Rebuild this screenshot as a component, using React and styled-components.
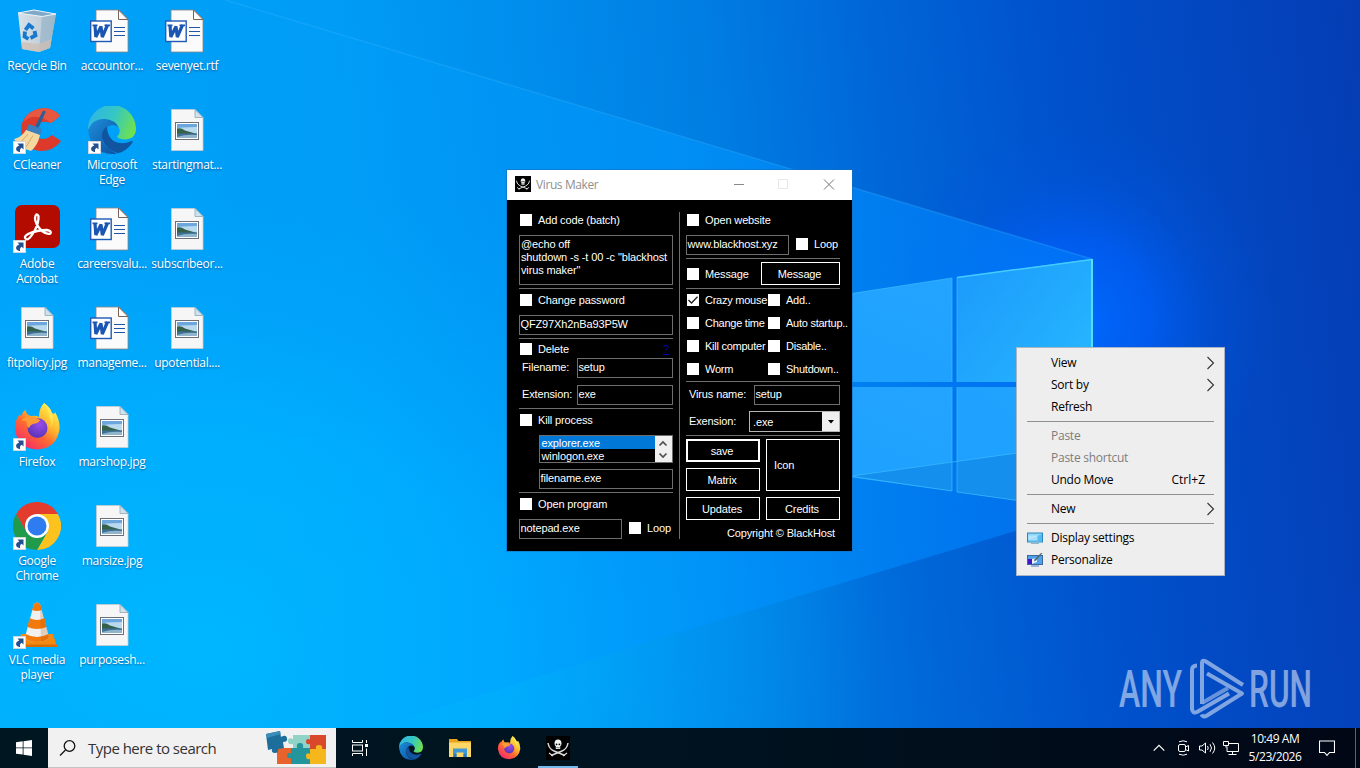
import React from "react";
import styled, { createGlobalStyle } from "styled-components";

const desktopIcons = [
  { name: "Recycle Bin", icon: RecycleIcon },
  { name: "CCleaner", icon: CCleanerIcon, shortcut: true },
  { name: "Adobe Acrobat", icon: AcrobatIcon, shortcut: true },
  { name: "fitpolicy.jpg", icon: JpgIcon },
  { name: "Firefox", icon: FirefoxIcon, shortcut: true },
  { name: "Google Chrome", icon: ChromeIcon, shortcut: true },
  { name: "VLC media player", icon: VlcIcon, shortcut: true },
  { name: "accountor...", icon: WordIcon },
  { name: "Microsoft Edge", icon: EdgeIcon, shortcut: true },
  { name: "careersvalu...", icon: WordIcon },
  { name: "manageme...", icon: WordIcon },
  { name: "marshop.jpg", icon: JpgIcon },
  { name: "marsize.jpg", icon: JpgIcon },
  { name: "purposesh...", icon: JpgIcon },
  { name: "sevenyet.rtf", icon: WordIcon },
  { name: "startingmat...", icon: JpgIcon },
  { name: "subscribeor...", icon: JpgIcon },
  { name: "upotential....", icon: JpgIcon },
];

const menuGroups = [
  [
    { label: "View", sub: true },
    { label: "Sort by", sub: true },
    { label: "Refresh" },
  ],
  [
    { label: "Paste", disabled: true },
    { label: "Paste shortcut", disabled: true },
    { label: "Undo Move", keys: "Ctrl+Z" },
  ],
  [{ label: "New", sub: true }],
  [
    { label: "Display settings", icon: DisplayIcon },
    { label: "Personalize", icon: PersonalizeIcon },
  ],
];

const toggles = [
  ["Crazy mouse", "Add..", true],
  ["Change time", "Auto startup.."],
  ["Kill computer", "Disable.."],
  ["Worm", "Shutdown.."],
];

export default function App() {
  return (
    <>
      <GlobalStyle />
      <Screen>
        <Wallpaper />
        <Desktop>
          {desktopIcons.map(({ name, icon: Icon, shortcut }) => (
            <DesktopItem key={name}>
              <IconBox>
                <Icon />
                {shortcut && <ShortcutArrow />}
              </IconBox>
              <span>{name}</span>
            </DesktopItem>
          ))}
        </Desktop>
        <MakerWindow />
        <ContextMenu />
        <AnyRunLogo />
        <Taskbar />
      </Screen>
    </>
  );
}

function Check({ label, checked, top, width }) {
  return (
    <CheckLabel $top={top} $width={width}>
      <CheckBox>
        {checked && (
          <svg width="12" height="12" viewBox="0 0 12 12">
            <path
              d="M1.500 6 L4.500 9 L10.500 2.800"
              fill="none"
              stroke="#222"
              strokeWidth="1.300"
            />
          </svg>
        )}
      </CheckBox>
      {label}
    </CheckLabel>
  );
}

function MakerWindow() {
  return (
    <WindowFrame>
      <TitleBar>
        <SkullIcon size={16} />
        <h1>Virus Maker</h1>
        <TitleButtons>
          <svg width="118" height="30" viewBox="0 0 118 30" fill="none">
            <path d="M4 14.500h10" stroke="#8a8a8a" />
            <rect x="48.500" y="9.500" width="9" height="9" stroke="#e8e8e8" />
            <path d="M94 9.500l10 10M104 9.500l-10 10" stroke="#777" />
          </svg>
        </TitleButtons>
      </TitleBar>
      <WindowBody>
        <Column>
          <Check label="Add code (batch)" top={2} />
          <Field $top={9} $height={50} $multi>
            @echo off
            <br />
            shutdown -s -t 00 -c "blackhost
            <br />
            virus maker"
          </Field>
          <Rule $top={3} />
          <Check label="Change password" top={5} />
          <Field $top={9} $height={20}>
            QFZ97Xh2nBa93P5W
          </Field>
          <Rule $top={3} />
          <Row $top={4} $height={12}>
            <Check label="Delete" />
            <HelpLink>?</HelpLink>
          </Row>
          <Row $top={3}>
            <FieldLabel $width={55}>Filename:</FieldLabel>
            <Field $height={20}>setup</Field>
          </Row>
          <Row $top={7}>
            <FieldLabel $width={55}>Extension:</FieldLabel>
            <Field $height={20}>exe</Field>
          </Row>
          <Rule $top={3} />
          <Check label="Kill process" top={5} />
          <Indent $top={9}>
            <ListBox>
              <ListItems>
                <ListItem $selected>explorer.exe</ListItem>
                <ListItem>winlogon.exe</ListItem>
              </ListItems>
              <ScrollButtons>
                <svg width="16" height="26" viewBox="0 0 16 26" fill="none">
                  <path
                    d="M4.500 9.500L8 6l3.500 3.500M4.500 17.500L8 21l3.500-3.500"
                    stroke="#505050"
                    strokeWidth="1.700"
                  />
                </svg>
              </ScrollButtons>
            </ListBox>
          </Indent>
          <Indent $top={6}>
            <Field $height={20}>filename.exe</Field>
          </Indent>
          <Rule $top={3} />
          <Check label="Open program" top={5} />
          <Row $top={9}>
            <Field $height={20} $width={103}>
              notepad.exe
            </Field>
            <LoopSlot>
              <Check label="Loop" />
            </LoopSlot>
          </Row>
        </Column>
        <Divider />
        <Column>
          <Check label="Open website" top={2} />
          <Row $top={9}>
            <Field $height={20} $width={103}>
              www.blackhost.xyz
            </Field>
            <LoopSlot>
              <Check label="Loop" />
            </LoopSlot>
          </Row>
          <Rule $top={3} />
          <Row $top={3}>
            <Check label="Message" width={75} />
            <FlatButton>Message</FlatButton>
          </Row>
          <Rule $top={3} />
          <ToggleGrid>
            {toggles.map(([left, right, checked]) => (
              <React.Fragment key={left}>
                <Check label={left} checked={checked} />
                <Check label={right} />
              </React.Fragment>
            ))}
          </ToggleGrid>
          <Rule $top={6} />
          <Row $top={3}>
            <FieldLabel $width={65}>Virus name:</FieldLabel>
            <Field $height={20}>setup</Field>
          </Row>
          <Row $top={6}>
            <FieldLabel $width={60}>Exension:</FieldLabel>
            <Combo>
              <span>.exe</span>
              <ComboArrow>
                <svg width="6" height="4" viewBox="0 0 6 4">
                  <path d="M0 0h6L3 3.500z" fill="#000" />
                </svg>
              </ComboArrow>
            </Combo>
          </Row>
          <Rule $top={3} />
          <ButtonGrid>
            <FlatButton $primary>save</FlatButton>
            <IconButton>Icon</IconButton>
            <FlatButton>Matrix</FlatButton>
            <FlatButton>Updates</FlatButton>
            <FlatButton>Credits</FlatButton>
          </ButtonGrid>
          <Copyright>Copyright © BlackHost</Copyright>
        </Column>
      </WindowBody>
    </WindowFrame>
  );
}

function ContextMenu() {
  return (
    <Menu>
      {menuGroups.map((group, i) => (
        <React.Fragment key={i}>
          {i > 0 && <MenuSeparator />}
          {group.map(({ label, sub, disabled, keys, icon: Icon }) => (
            <MenuItem key={label} $disabled={disabled}>
              <MenuIcon>{Icon && <Icon />}</MenuIcon>
              <span>{label}</span>
              {keys && <kbd>{keys}</kbd>}
              {sub && (
                <svg width="10" height="14" viewBox="0 0 10 14">
                  <path
                    d="M1.500 1l6 6-6 6"
                    fill="none"
                    stroke="#333"
                    strokeWidth="1.100"
                  />
                </svg>
              )}
            </MenuItem>
          ))}
        </React.Fragment>
      ))}
    </Menu>
  );
}

function Taskbar() {
  return (
    <Bar>
      <StartButton>
        <svg width="16" height="16" viewBox="0 0 16 16" fill="#fff">
          <path d="M0 2.300L6.700 1.300V7.500H0zM7.500 1.200L16 0V7.500H7.500zM0 8.300H6.700V14.600L0 13.700zM7.500 8.300H16V16L7.500 14.800z" />
        </svg>
      </StartButton>
      <SearchBox>
        <svg width="18" height="18" viewBox="0 0 18 18" fill="none">
          <circle cx="10.500" cy="7" r="5.300" stroke="#111" strokeWidth="1.300" />
          <path d="M6.500 11L1 16.500" stroke="#111" strokeWidth="1.300" />
        </svg>
        <span>Type here to search</span>
        <PuzzleIcon />
      </SearchBox>
      <TaskButton $first>
        <TaskViewIcon />
      </TaskButton>
      <TaskButton>
        <EdgeIcon size={24} />
      </TaskButton>
      <TaskButton>
        <FolderIcon />
      </TaskButton>
      <TaskButton>
        <FirefoxIcon size={24} />
      </TaskButton>
      <TaskButton $active>
        <SkullIcon size={24} />
      </TaskButton>
      <Tray>
        <svg width="86" height="18" viewBox="0 0 86 18" fill="none" stroke="#fff">
          <path d="M.7 11.700L6 6.400l5.300 5.300" strokeWidth="1.200" />
          <rect x="25.500" y="5.500" width="7" height="7" rx="1.500" />
          <path d="M32.500 8l3-1.500v5.500l-3-1.500M26 2.800q4.500-2 8 0M26 15.200q4.500 2 8 0" />
          <path d="M46.500 7h2.500l3.500-3v10l-3.500-3h-2.500z" />
          <path d="M54.500 7q1.500 2 0 4M57 5.200q3 3.800 0 7.600M59.500 3.500q4.500 5.500 0 11" />
          <path d="M75.500 4.500h10v8h-11.500v-5M79.500 12.500v3M75.500 15.500h8M70.500 2.500h5v4h-5zM73 6.500v2" />
        </svg>
        <Clock>
          <span>10:49 AM</span>
          <span>5/23/2026</span>
        </Clock>
        <svg width="16" height="17" viewBox="0 0 16 17" fill="none">
          <path
            d="M.5 1h15v11.500H10.500L8 15.300 5.500 12.500H.5z"
            stroke="#fff"
            strokeWidth="1.100"
          />
        </svg>
        <ShowDesktop />
      </Tray>
    </Bar>
  );
}

function Wallpaper() {
  return (
    <Backdrop viewBox="0 0 1360 768" preserveAspectRatio="none">
      <defs>
        <linearGradient id="sky" x1="0" x2="1" y1="0.060" y2="0">
          <stop offset="0" stopColor="#00a3fa" />
          <stop offset=".25" stopColor="#009cf6" />
          <stop offset=".4" stopColor="#008cec" />
          <stop offset=".52" stopColor="#007de2" />
          <stop offset=".64" stopColor="#0066d8" />
          <stop offset=".78" stopColor="#0050cb" />
          <stop offset="1" stopColor="#053db4" />
        </linearGradient>
        <radialGradient
          id="lowGlow"
          gradientUnits="userSpaceOnUse"
          cx="200"
          cy="640"
          r="680"
          gradientTransform="translate(0 200) scale(1 .7)"
        >
          <stop offset="0" stopColor="#00b6ff" />
          <stop offset=".45" stopColor="#00b1ff" stopOpacity=".85" />
          <stop offset="1" stopColor="#00a4f8" stopOpacity="0" />
        </radialGradient>
        <radialGradient
          id="winGlow"
          gradientUnits="userSpaceOnUse"
          cx="1075"
          cy="320"
          r="200"
        >
          <stop offset="0" stopColor="#006aff" />
          <stop offset=".4" stopColor="#0060fa" stopOpacity=".7" />
          <stop offset=".7" stopColor="#0058e6" stopOpacity=".28" />
          <stop offset="1" stopColor="#0054dc" stopOpacity="0" />
        </radialGradient>
        <linearGradient
          id="beam"
          gradientUnits="userSpaceOnUse"
          x1="250"
          x2="1093"
          y1="0"
          y2="0"
        >
          <stop offset="0" stopColor="#00a8ff" stopOpacity="0" />
          <stop offset=".5" stopColor="#0098ff" stopOpacity=".6" />
          <stop offset="1" stopColor="#0078f8" stopOpacity=".7" />
        </linearGradient>
        <linearGradient id="pane" x1="0" x2="1" y1="1" y2="0">
          <stop offset="0" stopColor="#1b9fff" />
          <stop offset="1" stopColor="#23a4ff" />
        </linearGradient>
        <linearGradient id="paneBright" x1="0" x2="1" y1="0" y2=".7">
          <stop offset="0" stopColor="#1b99fb" />
          <stop offset="1" stopColor="#26b4ff" />
        </linearGradient>
      </defs>
      <rect width="1360" height="768" fill="url(#sky)" />
      <rect width="1360" height="768" fill="url(#lowGlow)" />
      <circle cx="1075" cy="320" r="200" fill="url(#winGlow)" />
      <path d="M225 0L1092 259V508L680 632 250 768H0V0z" fill="url(#beam)" />
      <path d="M225 0L1092 259" stroke="#35b4ff" strokeWidth="1.500" opacity=".3" />
      <path d="M700 317L952 278V382H700z" fill="url(#pane)" />
      <path d="M957 277L1092 259V382H957z" fill="url(#paneBright)" />
      <path d="M700 387H952V491L700 457z" fill="url(#pane)" />
      <path d="M957 387H1092V511L957 492z" fill="url(#pane)" />
      <path d="M852 476L952 462V491zM957 461.500L1092 443V511L957 492z" fill="#148fee" />
      <path
        d="M952 382V278L852 293.500M957 382V277.500M952 387V491L852 476.500M957 387V492L1092 511M1092 442.500L852 476"
        fill="none"
        stroke="#3cbcff"
        strokeWidth="1"
        opacity=".7"
      />
      <path
        d="M957 277.500L1092 259.500"
        stroke="#45ccff"
        strokeWidth="1.500"
      />
      <path d="M1092 259V511" stroke="#4fe0ff" strokeWidth="2" />
    </Backdrop>
  );
}

function AnyRunLogo() {
  return (
    <Watermark width="216" height="66" viewBox="0 0 216 66">
      <g fill="#fff" opacity=".5">
        <text x="3" y="52" textLength="63" lengthAdjust="spacingAndGlyphs">
          ANY
        </text>
        <text x="133" y="52" textLength="63" lengthAdjust="spacingAndGlyphs">
          RUN
        </text>
      </g>
      <g
        fill="none"
        stroke="#fff"
        opacity=".5"
        strokeWidth="4"
        strokeLinejoin="round"
      >
        <path d="M81 10.500Q76 10.500 76 15V54Q77 59 81 57L113 38.500" />
        <path d="M86 49V8Q86 4.500 89.500 6.200L127 30" />
        <path d="M91 18.500L126 38.500 91 60.500Q87 63 85.500 59.500" />
        <path d="M86 48L112 33" opacity=".8" />
      </g>
    </Watermark>
  );
}

/* ---------- icons ---------- */

function ShortcutArrow() {
  return (
    <ArrowBadge width="13" height="13" viewBox="0 0 13 13">
      <rect x=".5" y=".5" width="12" height="12" fill="#fff" stroke="#cfd6dc" />
      <path d="M4.500 2.500h6v6L8.700 6.700Q6.300 8 7.200 11.300 1.800 10 3.400 6.500 4.500 5 6.300 4.400z" fill="#24508f" />
    </ArrowBadge>
  );
}

function RecycleIcon() {
  return (
    <svg width="48" height="48" viewBox="0 0 48 48">
      <defs>
        <linearGradient id="bin" x1="0" x2="1">
          <stop offset="0" stopColor="#d7e2e9" />
          <stop offset=".6" stopColor="#c3d0d9" />
          <stop offset="1" stopColor="#9fb3c2" />
        </linearGradient>
      </defs>
      <path d="M5 6L29 9 43 7 37 41 26 45 9 42z" fill="url(#bin)" />
      <path d="M29 9L43 7 37 41 26 45z" fill="#9db9cc" opacity=".8" />
      <path d="M8.500 35l17 2 13-5-1.500 9L26 45 9 42z" fill="#cdbfb2" opacity=".75" />
      <path d="M5 6L21 3 43 7 29 9.500z" fill="#7fa9c6" stroke="#eef4f8" />
      <g fill="none" stroke="#1778d0" strokeWidth="3.800">
        <path d="M12.500 23l3.500-5 4.500 3.500" />
        <path d="M21.500 24l1 4.500-5 2.500" />
        <path d="M15.500 32l-4-2.500 .5-5" />
      </g>
    </svg>
  );
}

function WordIcon() {
  return (
    <svg width="48" height="48" viewBox="0 0 48 48">
      <path d="M8 3H31L40 12V45H8z" fill="#fbfbfb" stroke="#8b8682" strokeWidth=".8" />
      <path d="M30.500 3V12.500H40z" fill="#fff" stroke="#7b6258" strokeWidth="1" />
      <path d="M26 20.500h11M26 24.500h11M26 28.500h11" stroke="#1f57a6" strokeWidth="1.100" />
      <rect x="2.700" y="14" width="20.500" height="20.500" fill="#fff" stroke="#1d5ab6" strokeWidth="1.400" />
      <path
        d="M7 18l.8 12L13 19.500 14.300 30 19.500 18"
        fill="none"
        stroke="#1b56b3"
        strokeWidth="3.200"
        strokeLinejoin="bevel"
      />
      <path d="M4.500 18.300h5M16.500 18.300h5.500" stroke="#1b56b3" strokeWidth="1.800" />
    </svg>
  );
}

function JpgIcon() {
  return (
    <svg width="48" height="48" viewBox="0 0 48 48">
      <path d="M8.500 3.500H32L40 11.500V44.500H8.500z" fill="#f6f6f6" stroke="#c9ccd0" strokeWidth=".8" />
      <path d="M32 3.500V11.500H40z" fill="#cfe3ef" stroke="#8fa6b2" strokeWidth=".8" />
      <rect x="12.500" y="16.500" width="23" height="17" fill="#fff" stroke="#6a6f78" />
      <rect x="14" y="18" width="20" height="14" fill="#b9d9ee" />
      <path d="M14 18h20v3q-8 0-20 1z" fill="#6da6dc" />
      <path d="M14 22.500q4-1 8 2l12 3.500H14z" fill="#35604a" />
      <path d="M14 27.500h20V32H14z" fill="#3f7198" />
      <path d="M14 31q9-3 20-2v3H14z" fill="#8fb4cc" />
    </svg>
  );
}

function CCleanerIcon() {
  return (
    <svg width="48" height="48" viewBox="0 0 48 48">
      <path
        d="M47 10Q39 0 25 3 8 8 8 25 9 43 27 45 41 45 48 35L39 29Q32 35 26 32 20 28 22 21 27 13 38 17z"
        fill="#dd3a2b"
      />
      <path d="M47 10Q39 0 25 3 14 6 10 16 22 5 38 17z" fill="#e8573f" />
      <path d="M30 4.500l2.800 1-8 18-3.500-1.500z" fill="#2b5f96" />
      <path d="M16 18l13 5-2 7-14-5.500z" fill="#3a80c0" />
      <path d="M13 24L27 29Q25 39 18 45 6 42 1 33 9 31 13 24z" fill="#f5d7a0" />
      <path d="M15 28L8 36M20 29.500L13 41" stroke="#d9a964" />
    </svg>
  );
}

function EdgeIcon({ size = 48 }) {
  const id = "edge" + size;
  return (
    <svg width={size} height={size} viewBox="0 0 48 48">
      <defs>
        <linearGradient id={id + "a"} x1="0" x2="1" y1=".3" y2=".6">
          <stop offset="0" stopColor="#2fb5e3" />
          <stop offset=".5" stopColor="#35c7c4" />
          <stop offset="1" stopColor="#6ee24c" />
        </linearGradient>
        <linearGradient id={id + "b"} x1="0" x2="1" y1="0" y2="1">
          <stop offset="0" stopColor="#1d8fdc" />
          <stop offset="1" stopColor="#0c4d9c" />
        </linearGradient>
      </defs>
      <path
        d="M0 24A24 24 0 0 1 48 22Q48 33 37 33.500 30 33 29 30.500 33 27 31 22 27 14 16 13 6 13 0 24z"
        fill={"url(#" + id + "a)"}
      />
      <path
        d="M0 24Q5 12 17 13 28 14 31 22 29 19 24 19 14 21 14 32 16 43 29 47.400 26 48 24 48 3 47 0 24z"
        fill={"url(#" + id + "b)"}
      />
      <path
        d="M19 20.500Q13 25 14 32 17 44 30 47.300 39 45 44.500 36.500 45 34.500 43 35.300 34 39.500 25.500 35 19 30 19 20.500z"
        fill="#11549f"
      />
    </svg>
  );
}

function AcrobatIcon() {
  return (
    <svg width="48" height="48" viewBox="0 0 48 48">
      <rect x="2" y="0" width="45" height="43" rx="7" fill="#b30b00" />
      <path
        d="M13 34Q10 32 15 29 24 25 34 25 39 26 37.500 28.500 34 30 29 26 22 19 22 13 23 7 25.500 11 26 17 22 25 16 36 13 34z"
        fill="none"
        stroke="#fff"
        strokeWidth="2.300"
        strokeLinejoin="round"
      />
    </svg>
  );
}

function FirefoxIcon({ size = 48 }) {
  const id = "fox" + size;
  return (
    <svg width={size} height={size} viewBox="0 0 48 48">
      <defs>
        <linearGradient id={id} x1=".85" x2=".2" y1=".1" y2=".95">
          <stop offset="0" stopColor="#fff04a" />
          <stop offset=".35" stopColor="#ffb52e" />
          <stop offset=".6" stopColor="#ff6a30" />
          <stop offset="1" stopColor="#f52a6c" />
        </linearGradient>
        <radialGradient id={id + "p"} cx=".6" cy=".3" r=".7">
          <stop offset="0" stopColor="#9a4bea" />
          <stop offset="1" stopColor="#5a35b8" />
        </radialGradient>
      </defs>
      <path
        d="M31 0Q37 4 39 10 42 12 42 9 47 17 46.500 26 44 45 24.500 46.500 5 46 2 27 1 18 7 11 7 14 9 12 9 9 12.500 7 13 12 18 13 23 12 26 14 26 5 31 0z"
        fill={"url(#" + id + ")"}
      />
      <circle cx="24.500" cy="25" r="10" fill={"url(#" + id + "p)"} />
      <path d="M8 18Q12 13 19 14 26 15 27 17.500 25 20.500 20 21 17 22 16 25 13 23 14 19 10 17 8 18z" fill="#ff9a35" />
      <path d="M31 1Q36 7 36 13 40 20 36 27 42 19 39 10 37 4 31 0z" fill="#fff06a" opacity=".6" />
    </svg>
  );
}

function ChromeIcon() {
  return (
    <svg width="48" height="48" viewBox="0 0 48 48">
      <path d="M24 24L3.200 12A24 24 0 0 1 44.800 12z" fill="#e33b2e" />
      <path d="M24 12H44.800A24 24 0 0 1 24 48L34.400 30z" fill="#fcc31e" />
      <path d="M3.200 12A24 24 0 0 0 24 48L34.400 30 13.600 30z" fill="#219a4b" />
      <path d="M3.200 12L13.600 30 24 24V12z" fill="#e33b2e" />
      <circle cx="24" cy="24" r="12" fill="#fff" />
      <circle cx="24" cy="24" r="9.500" fill="#2f7bf0" />
    </svg>
  );
}

function VlcIcon() {
  return (
    <svg width="48" height="48" viewBox="0 0 48 48">
      <path d="M8 33H40L44 45.500H5z" fill="#f38a10" />
      <path d="M5 43.500H44V46H5z" fill="#d96c00" />
      <path d="M21 3Q24 0 27 3L36 36Q34 41 24 41 14 41 12 36z" fill="#f0f0f0" />
      <path d="M21 3Q24 0 27 3L29 9Q24 11 19 9zM16.500 17Q24 21 31.500 17L33.500 26Q24 30 14.500 26zM12.500 33Q24 39 35.500 33L36 36Q34 41 24 41 14 41 12 36z" fill="#f27a0c" />
      <path d="M27 3L36 36Q34 40 28 41z" fill="#b05008" opacity=".22" />
    </svg>
  );
}

function SkullIcon({ size }) {
  return (
    <svg width={size} height={size} viewBox="0 0 24 24">
      <rect width="24" height="24" fill="#000" />
      <path
        d="M2 7Q3 13 8 15L19 19.500M22 7Q21 13 16 15L5 19.500"
        fill="none"
        stroke="#d8d8d8"
        strokeWidth="1.500"
      />
      <path d="M3 17l4 3M21 17l-4 3" stroke="#d8d8d8" strokeWidth="1.300" />
      <path d="M12 3.500Q15.500 3.700 15.500 7.500 15.500 9.500 14.200 10.200V13H9.800V10.200Q8.500 9.500 8.500 7.500 8.500 3.700 12 3.500z" fill="#f2f2f2" />
      <circle cx="10.600" cy="8.300" r=".9" fill="#000" />
      <circle cx="13.400" cy="8.300" r=".9" fill="#000" />
      <path d="M10.200 11.700h3.600" stroke="#000" strokeWidth=".5" />
    </svg>
  );
}

function TaskViewIcon() {
  return (
    <svg width="18" height="16" viewBox="0 0 18 16" fill="none" stroke="#fff">
      <path d="M1.500 0v2.500h10V0M1.500 16v-2.500h10V16" />
      <rect x="1.500" y="5" width="10" height="6" />
      <path d="M15.500 0v3M15.500 8.500V16" />
      <rect x="14.500" y="4.500" width="2" height="2" fill="#fff" />
    </svg>
  );
}

function FolderIcon() {
  return (
    <svg width="22" height="20" viewBox="0 0 22 20">
      <path d="M0 1h8l1.500 2H22v4H0z" fill="#e8a41c" />
      <path d="M0 4.500h22V19H0z" fill="#fcd767" />
      <path d="M4 10.500h14V19H14.500V14.500h-7V19H4z" fill="#3f97d3" />
      <path d="M5 16h2.500v3H5zM14.500 16H17v3h-2.500z" fill="#2878b4" />
    </svg>
  );
}

function PuzzleIcon() {
  return (
    <svg width="64" height="36" viewBox="0 0 64 36">
      <path d="M12 18h14v16H12z" fill="#e8632c" />
      <path d="M28 5h17v14H28v-5q-5 1-5-3t5-2z" fill="#8fd4c6" />
      <path d="M45 5h16v14H45v-5q-4 1-4-2.500t4-2z" fill="#d9482b" />
      <path d="M26 18h6q-1-5 3-5t3 5h7v16H26v-6q-4 1-4-2.500t4-2z" fill="#23959c" />
      <path d="M45 19h6q-1-4 3-4t3 4h4v15H45v-5q-4 1-4-3t4-2z" fill="#f5b71c" />
      <path d="M1 4L15 1l1 6q5-3 6 1t-4 4l1 6-6 1q1 4-3 4t-3-4l-4 1z" fill="#1d6e9b" />
      <path d="M1 4L15 1l.5 3L2 8z" fill="#3a8db8" />
    </svg>
  );
}

function DisplayIcon() {
  return (
    <svg width="16" height="14" viewBox="0 0 16 14">
      <rect x=".5" y="2" width="15" height="9" fill="#8fd6fa" stroke="#2b87b8" />
      <path d="M1 9l14-6v7.500H1z" fill="#54b9f2" />
      <path d="M1.500 4.500h9v5h-9z" fill="#c6ecfd" opacity=".7" />
      <path d="M4 12.500h8" stroke="#8fb6cb" />
    </svg>
  );
}

function PersonalizeIcon() {
  return (
    <svg width="16" height="14" viewBox="0 0 16 14">
      <rect x=".5" y="2.500" width="15" height="9" fill="#4ea2ea" stroke="#396a9b" />
      <path d="M1 6h4v5H1z" fill="#4614c8" />
      <path d="M5 6l5-1v4l-5 2z" fill="#e4f5ff" />
      <path d="M15.500 0L9 7.500l-2 1 .7-2.200L14 0z" fill="#53646c" />
      <path d="M4 13h8" stroke="#4a78c8" />
    </svg>
  );
}

/* ---------- styles ---------- */

const GlobalStyle = createGlobalStyle`
  * {
    box-sizing: border-box;
  }
  body {
    margin: 0;
    overflow: hidden;
  }
  svg {
    display: block;
    flex: none;
  }
`;

const Screen = styled.div`
  position: relative;
  display: flex;
  flex-direction: column;
  justify-content: space-between;
  width: 1360px;
  height: 768px;
  overflow: hidden;
  background: #0078d7;
  font-family: "Open Sans", "Noto Sans", sans-serif;
`;

const Backdrop = styled.svg`
  position: absolute;
  inset: 0;
  width: 100%;
  height: 100%;
`;

const Desktop = styled.div`
  position: relative;
  display: grid;
  grid-auto-flow: column;
  grid-template-rows: repeat(7, 99px);
  grid-auto-columns: 74px;
  column-gap: 1px;
  padding-top: 7px;
`;

const DesktopItem = styled.div`
  display: flex;
  flex-direction: column;
  align-items: center;
  gap: 3px;
  color: #fff;
  font-size: 12px;
  line-height: 15px;
  letter-spacing: -0.3px;
  text-align: center;
  text-shadow: 0 1px 2px rgba(0, 40, 90, 0.6);
`;

const IconBox = styled.div`
  position: relative;
  width: 48px;
  height: 48px;
`;

const ArrowBadge = styled.svg`
  position: absolute;
  left: 0;
  bottom: 0;
`;

const WindowFrame = styled.section`
  position: absolute;
  left: 507px;
  top: 170px;
  width: 345px;
  height: 381px;
  background: #000;
  box-shadow: 0 0 0 1px rgba(20, 110, 190, 0.6);
  font-family: "Liberation Sans", Arial, sans-serif;
  font-size: 11px;
  letter-spacing: -0.13px;
  color: #fff;
`;

const TitleBar = styled.header`
  display: flex;
  align-items: center;
  height: 30px;
  padding: 0 0 2px 8px;
  background: #fff;
  h1 {
    margin: 1px 0 0 5px;
    color: #8f8f8f;
    font: 12px "Open Sans", sans-serif;
    letter-spacing: -0.4px;
  }
`;

const TitleButtons = styled.div`
  margin: 1px 4px 0 auto;
`;

const WindowBody = styled.div`
  display: flex;
  padding: 12px;
`;

const Column = styled.div`
  width: 154px;
  white-space: nowrap;
`;

const Divider = styled.div`
  width: 1px;
  height: 327px;
  margin: 0 6px;
  background: #6e6e6e;
`;

const Rule = styled.div`
  height: 1px;
  margin-top: ${({ $top }) => $top}px;
  background: #6e6e6e;
`;

const Row = styled.div`
  display: flex;
  align-items: center;
  height: ${({ $height }) => ($height ? $height + "px" : "auto")};
  margin-top: ${({ $top }) => $top}px;
`;

const Indent = styled.div`
  margin: ${({ $top }) => $top}px 0 0 20px;
`;

const LoopSlot = styled.div`
  margin: -2px 0 0 6px;
`;

const CheckLabel = styled.div`
  display: flex;
  align-items: center;
  gap: 6px;
  height: 12px;
  margin-top: ${({ $top = 0 }) => $top}px;
  padding-left: 1px;
  width: ${({ $width }) => ($width ? $width + "px" : "auto")};
  white-space: nowrap;
`;

const CheckBox = styled.span`
  flex: none;
  width: 12px;
  height: 12px;
  background: #fff;
`;

const Field = styled.div`
  flex: ${({ $width }) => ($width ? "none" : "1")};
  width: ${({ $width }) => ($width ? $width + "px" : "auto")};
  height: ${({ $height }) => $height}px;
  margin-top: ${({ $top = 0 }) => $top}px;
  padding: ${({ $multi }) => ($multi ? "2px 1px" : "0 0.5px")};
  border: 1px solid #6e6e6e;
  line-height: ${({ $multi }) => ($multi ? 13 : 17)}px;
  overflow: hidden;
`;

const FieldLabel = styled.span`
  width: ${({ $width }) => $width + 3}px;
  margin-top: -2px;
  padding-left: 3px;
`;

const HelpLink = styled.a`
  margin-left: auto;
  padding-right: 4px;
  color: #0000b4;
  text-decoration: underline;
`;

const ListBox = styled.div`
  display: flex;
  height: 28px;
  border: 1px solid #6e6e6e;
`;

const ListItems = styled.div`
  flex: 1;
`;

const ListItem = styled.div`
  height: 13px;
  padding-left: 1.5px;
  line-height: 14px;
  background: ${({ $selected }) => ($selected ? "#0078d7" : "transparent")};
`;

const ScrollButtons = styled.div`
  width: 17px;
  background: #f0f0f0;
`;

const FlatButton = styled.button`
  flex: 1;
  height: 23px;
  padding: 0 2px 0 0;
  border: ${({ $primary }) => ($primary ? 2 : 1)}px solid #fff;
  background: #000;
  color: #fff;
  font: inherit;
  letter-spacing: inherit;
`;

const IconButton = styled(FlatButton)`
  grid-row: span 2;
  height: 52px;
  padding-left: 7px;
  text-align: left;
`;

const ToggleGrid = styled.div`
  display: grid;
  grid-template-columns: 81px 81px;
  row-gap: 11px;
  margin-top: 5px;
  letter-spacing: -0.25px;
`;

const Combo = styled.div`
  display: flex;
  justify-content: space-between;
  flex: 1;
  height: 21px;
  border: 1px solid #b4b4b4;
  padding-left: 3px;
  line-height: 20px;
`;

const ComboArrow = styled.span`
  display: grid;
  place-items: center;
  width: 17px;
  background: #f0f0f0;
`;

const ButtonGrid = styled.div`
  display: grid;
  grid-template-columns: 74px 74px;
  gap: 6px;
  margin-top: 3px;
`;

const Copyright = styled.div`
  margin-top: 7px;
  padding-right: 5px;
  text-align: right;
`;

const Menu = styled.div`
  position: absolute;
  left: 1016px;
  top: 347px;
  width: 209px;
  height: 229px;
  padding: 4px 2px;
  border: 1px solid #a9b4c4;
  background: #eeeeee;
`;

const MenuItem = styled.div`
  display: flex;
  align-items: center;
  height: 22px;
  padding: 0 6px 0 8px;
  color: ${({ $disabled }) => ($disabled ? "#7d7d7d" : "#000")};
  font-size: 12px;
  letter-spacing: -0.25px;
  span {
    flex: 1;
    padding-bottom: 2px;
  }
  kbd {
    padding: 0 11px 2px 0;
    font: inherit;
    letter-spacing: 0;
  }
`;

const MenuIcon = styled.div`
  width: 24px;
`;

const MenuSeparator = styled.div`
  height: 7px;
  padding: 3px 8px;
  &::before {
    content: "";
    display: block;
    height: 1px;
    background: #909090;
  }
`;

const Watermark = styled.svg`
  position: absolute;
  left: 1116px;
  top: 655px;
  overflow: visible;
  text {
    font: 500 51px Roboto, sans-serif;
  }
`;

const Bar = styled.footer`
  position: relative;
  display: flex;
  height: 40px;
  background: linear-gradient(90deg, #001722, #00121f 55%, #020716);
  color: #fff;
`;

const StartButton = styled.div`
  display: grid;
  place-items: center;
  width: 48px;
`;

const SearchBox = styled.div`
  display: flex;
  align-items: center;
  width: 288px;
  padding: 0 7px 0 11px;
  border-bottom: 1px solid #c4c4c4;
  background: #f1f1f1;
  color: #333;
  font-size: 15px;
  letter-spacing: -0.52px;
  span {
    flex: 1;
    padding-left: 11px;
  }
`;

const TaskButton = styled.div`
  display: grid;
  place-items: center;
  width: ${({ $first, $active }) => ($active ? 40 : $first ? 48 : 49)}px;
  margin-right: ${({ $first }) => ($first ? 2 : 0)}px;
  margin-left: ${({ $active }) => ($active ? 5 : 0)}px;
  padding-top: ${({ $active }) => ($active ? 2 : 0)}px;
  border-bottom: ${({ $active }) => ($active ? "2px solid #76b9ed" : "none")};
`;

const Tray = styled.div`
  display: flex;
  align-items: center;
  margin-left: auto;
`;

const Clock = styled.div`
  display: flex;
  flex-direction: column;
  align-items: center;
  width: 72px;
  margin-right: 8px;
  font-size: 12px;
  line-height: 18px;
  letter-spacing: -0.45px;
`;

const ShowDesktop = styled.div`
  width: 5px;
  height: 40px;
  margin-left: 20px;
  border-left: 1px solid #5b6470;
`;
